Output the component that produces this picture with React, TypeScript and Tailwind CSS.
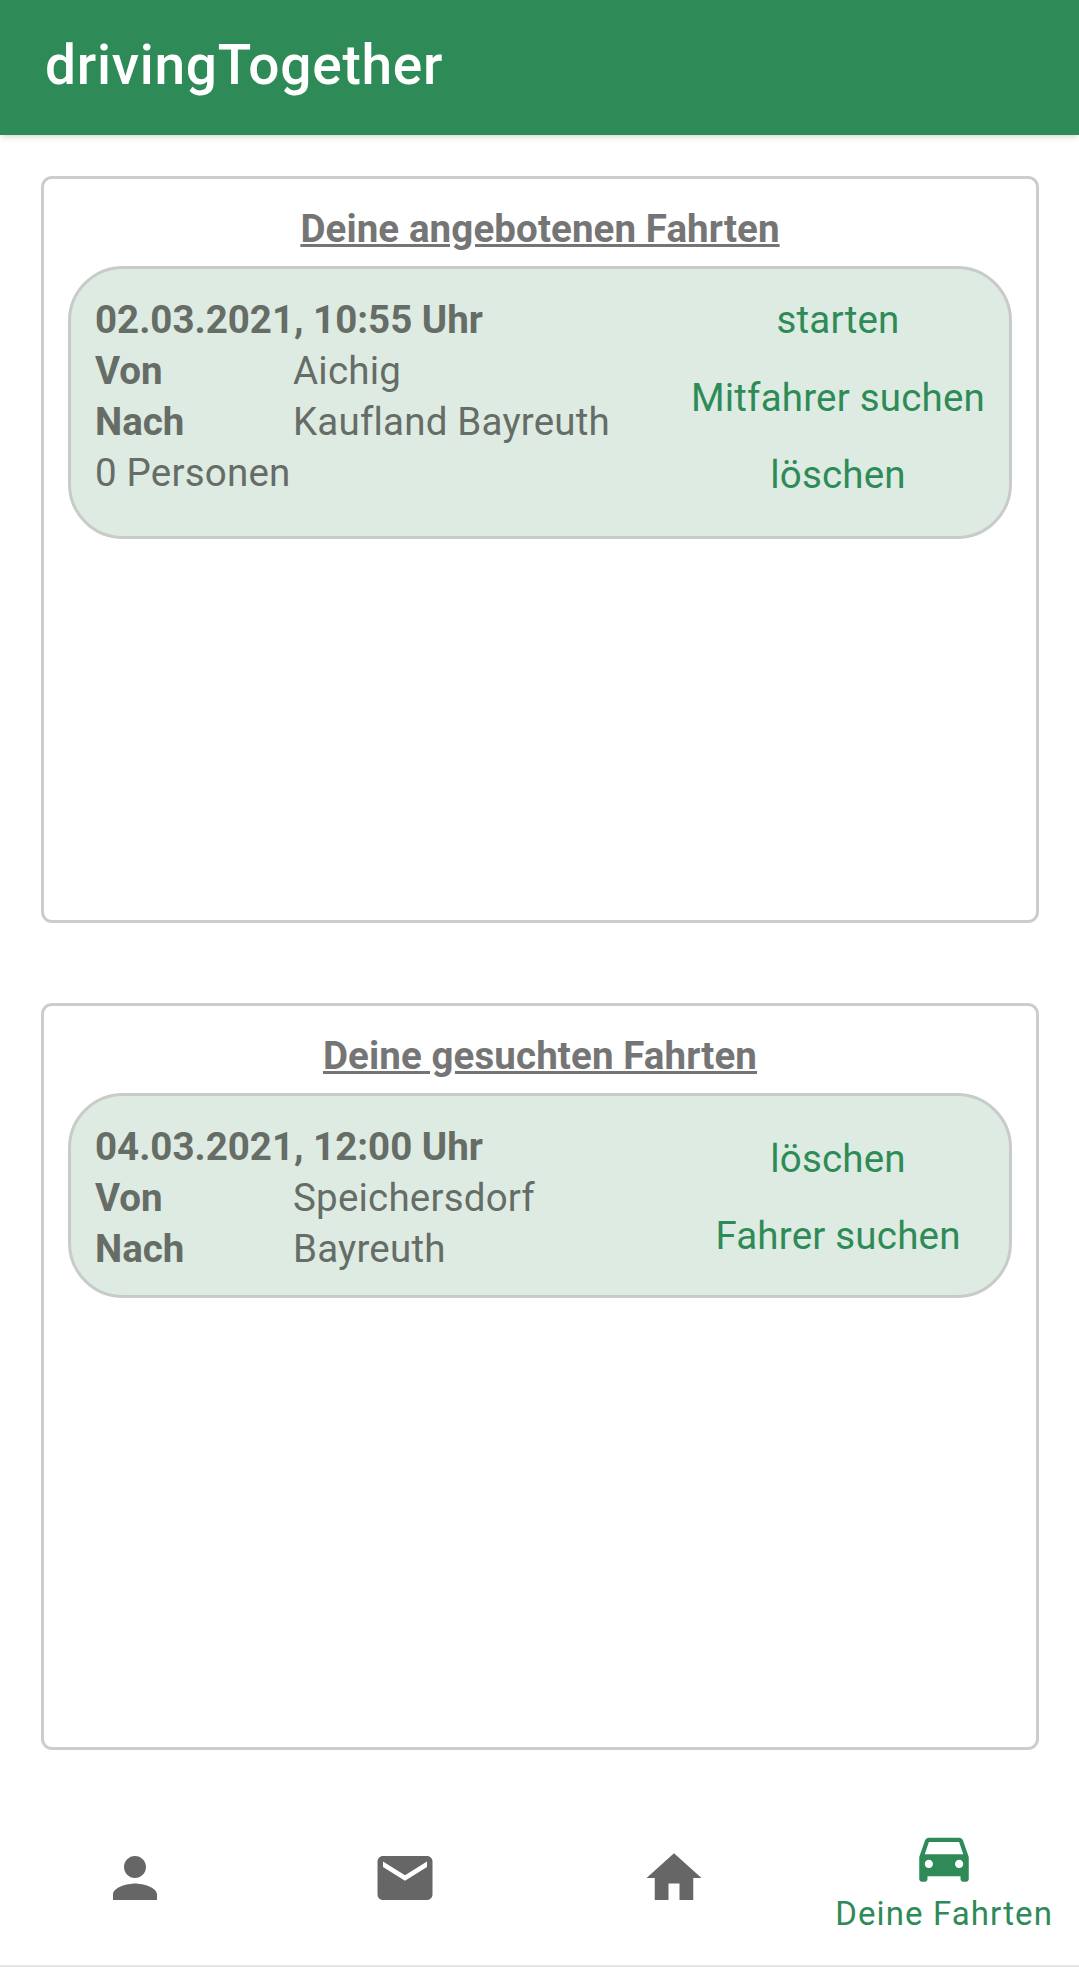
import type { ReactNode } from 'react';

function Row({ label, value }: { label: string; value: string }) {
  return (
    <div className="flex h-[51px] items-center">
      <span className="w-[198px] font-bold">{label}</span>
      <span className="tracking-[0.2px]">{value}</span>
    </div>
  );
}

function Ride({ date, from, to, persons, actions, className }: { date: string; from: string; to: string; persons?: string; actions: string[]; className: string }) {
  return (
    <div className={`flex rounded-[55px] border-[3px] border-[#c9cbc9] bg-[#deebe2] pl-[24px] pr-[21px] ${className}`}>
      <div className="flex-1 pt-[25px] text-[38.5px] text-[#666c66]">
        <div className="flex h-[51px] items-center font-bold">{date}</div>
        <Row label="Von" value={from} />
        <Row label="Nach" value={to} />
        {persons && <div className="flex h-[51px] items-center tracking-[0.2px]">{persons}</div>}
      </div>
      <div className="flex w-[300px] flex-col items-center justify-center gap-[29.5px] text-[38.5px] leading-[48px] tracking-[0.2px] text-[#2e8b57]">
        {actions.map((a) => (
          <span key={a}>{a}</span>
        ))}
      </div>
    </div>
  );
}

function Section({ title, children }: { title: string; children: ReactNode }) {
  return (
    <section className="flex h-[747px] flex-col rounded-[11px] border-[3px] border-[#cccccc] bg-white pl-[24px] pr-[24px] pt-[26px]">
      <h2 className="mb-[14px] text-center text-[38.5px] leading-[47px] font-bold tracking-[0.1px] text-[#757575] underline">{title}</h2>
      {children}
    </section>
  );
}

const icons = {
  person: 'M12 12c2.21 0 4-1.79 4-4s-1.79-4-4-4-4 1.79-4 4 1.79 4 4 4zm0 2c-2.67 0-8 1.34-8 4v2h16v-2c0-2.66-5.33-4-8-4z',
  mail: 'M20 4H4c-1.1 0-1.99.9-1.99 2L2 18c0 1.1.9 2 2 2h16c1.1 0 2-.9 2-2V6c0-1.1-.9-2-2-2zm0 4l-8 5-8-5V6l8 5 8-5v2z',
  home: 'M10 20v-6h4v6h5v-8h3L12 3 2 12h3v8z',
  car: 'M18.92 6.01C18.72 5.42 18.16 5 17.5 5h-11c-.66 0-1.21.42-1.42 1.01L3 12v8c0 .55.45 1 1 1h1c.55 0 1-.45 1-1v-1h12v1c0 .55.45 1 1 1h1c.55 0 1-.45 1-1v-8l-2.08-5.99zM6.5 16c-.83 0-1.5-.67-1.5-1.5S5.67 13 6.5 13s1.5.67 1.5 1.5S7.33 16 6.5 16zm11 0c-.83 0-1.5-.67-1.5-1.5s.67-1.5 1.5-1.5 1.5.67 1.5 1.5-.67 1.5-1.5 1.5zM5 11l1.5-4.5h11L19 11H5z',
};

function NavItem({ icon, label }: { icon: string; label?: string }) {
  return (
    <div className={`flex flex-1 flex-col items-center justify-center ${label ? 'pt-[4px] text-[#2e8b57]' : 'text-[#666666]'}`}>
      <svg viewBox="0 0 24 24" className="h-[66px] w-[66px]" fill="currentColor">
        <path d={icon} />
      </svg>
      {label && <span className="mt-[2px] text-[33px] leading-[44px] tracking-[1.1px]">{label}</span>}
    </div>
  );
}

export default function App() {
  return (
    <div className="flex h-[1967px] w-[1079px] flex-col bg-white font-['Roboto',sans-serif]">
      <header className="flex h-[135px] items-center bg-[#2e8b57] pb-[5px] pl-[45px] shadow-md">
        <h1 className="text-[55px] font-medium tracking-[0.75px] text-white">drivingTogether</h1>
      </header>
      <main className="flex flex-col gap-[80px] pl-[41px] pr-[40px] pt-[41px]">
        <Section title="Deine angebotenen Fahrten">
          <Ride className="h-[273px] [&>div:last-child]:pb-[10px]" date="02.03.2021, 10:55 Uhr" from="Aichig" to="Kaufland Bayreuth" persons="0 Personen" actions={['starten', 'Mitfahrer suchen', 'löschen']} />
        </Section>
        <Section title="Deine gesuchten Fahrten">
          <Ride className="h-[205px] [&>div:last-child]:pt-[4px]" date="04.03.2021, 12:00 Uhr" from="Speichersdorf" to="Bayreuth" actions={['löschen', 'Fahrer suchen']} />
        </Section>
      </main>
      <nav className="mt-auto flex h-[176px] border-b-2 border-[#e6e6e6]">
        <NavItem icon={icons.person} />
        <NavItem icon={icons.mail} />
        <NavItem icon={icons.home} />
        <NavItem icon={icons.car} label="Deine Fahrten" />
      </nav>
    </div>
  );
}
